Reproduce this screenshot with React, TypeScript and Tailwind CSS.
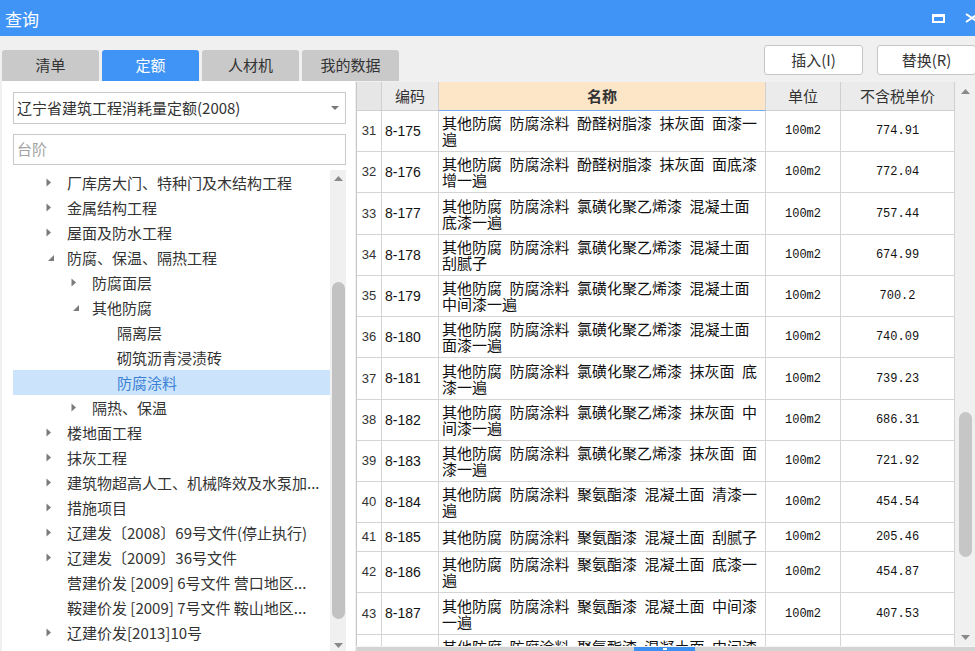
import React from "react";

const cjk = "font-['Noto_Sans_CJK_SC',sans-serif]";
const mono = "font-['Liberation_Mono',monospace]";
const sans = "font-['Liberation_Sans',sans-serif]";

type TreeNode = {
  label: string;
  level: 0 | 1 | 2;
  arrow: "right" | "down" | null;
  selected?: boolean;
};

const tree: TreeNode[] = [
  { label: "厂库房大门、特种门及木结构工程", level: 0, arrow: "right" },
  { label: "金属结构工程", level: 0, arrow: "right" },
  { label: "屋面及防水工程", level: 0, arrow: "right" },
  { label: "防腐、保温、隔热工程", level: 0, arrow: "down" },
  { label: "防腐面层", level: 1, arrow: "right" },
  { label: "其他防腐", level: 1, arrow: "down" },
  { label: "隔离层", level: 2, arrow: null },
  { label: "砌筑沥青浸渍砖", level: 2, arrow: null },
  { label: "防腐涂料", level: 2, arrow: null, selected: true },
  { label: "隔热、保温", level: 1, arrow: "right" },
  { label: "楼地面工程", level: 0, arrow: "right" },
  { label: "抹灰工程", level: 0, arrow: "right" },
  { label: "建筑物超高人工、机械降效及水泵加...", level: 0, arrow: "right" },
  { label: "措施项目", level: 0, arrow: "right" },
  { label: "辽建发〔2008〕69号文件(停止执行)", level: 0, arrow: "right" },
  { label: "辽建发〔2009〕36号文件", level: 0, arrow: "right" },
  { label: "营建价发 [2009] 6号文件 营口地区...", level: 0, arrow: null },
  { label: "鞍建价发 [2009] 7号文件 鞍山地区...", level: 0, arrow: null },
  { label: "辽建价发[2013]10号", level: 0, arrow: "right" },
  { label: "辽建价发[2014]29号", level: 0, arrow: "right" },
];

const indent = ["pl-[33px]", "pl-[58px]", "pl-[83px]"];

type Row = { n: number; code: string; lines: string[]; price: string; h: string };

const rows: Row[] = [
  { n: 31, code: "8-175", lines: ["其他防腐 防腐涂料 酚醛树脂漆 抹灰面 面漆一", "遍"], price: "774.91", h: "h-[41px]" },
  { n: 32, code: "8-176", lines: ["其他防腐 防腐涂料 酚醛树脂漆 抹灰面 面底漆", "增一遍"], price: "772.04", h: "h-[41px]" },
  { n: 33, code: "8-177", lines: ["其他防腐 防腐涂料 氯磺化聚乙烯漆 混凝土面", "底漆一遍"], price: "757.44", h: "h-[42px]" },
  { n: 34, code: "8-178", lines: ["其他防腐 防腐涂料 氯磺化聚乙烯漆 混凝土面", "刮腻子"], price: "674.99", h: "h-[41px]" },
  { n: 35, code: "8-179", lines: ["其他防腐 防腐涂料 氯磺化聚乙烯漆 混凝土面", "中间漆一遍"], price: "700.2", h: "h-[41px]" },
  { n: 36, code: "8-180", lines: ["其他防腐 防腐涂料 氯磺化聚乙烯漆 混凝土面", "面漆一遍"], price: "740.09", h: "h-[41px]" },
  { n: 37, code: "8-181", lines: ["其他防腐 防腐涂料 氯磺化聚乙烯漆 抹灰面 底", "漆一遍"], price: "739.23", h: "h-[42px]" },
  { n: 38, code: "8-182", lines: ["其他防腐 防腐涂料 氯磺化聚乙烯漆 抹灰面 中", "间漆一遍"], price: "686.31", h: "h-[41px]" },
  { n: 39, code: "8-183", lines: ["其他防腐 防腐涂料 氯磺化聚乙烯漆 抹灰面 面", "漆一遍"], price: "721.92", h: "h-[41px]" },
  { n: 40, code: "8-184", lines: ["其他防腐 防腐涂料 聚氨酯漆 混凝土面 清漆一", "遍"], price: "454.54", h: "h-[41px]" },
  { n: 41, code: "8-185", lines: ["其他防腐 防腐涂料 聚氨酯漆 混凝土面 刮腻子"], price: "205.46", h: "h-[29px]" },
  { n: 42, code: "8-186", lines: ["其他防腐 防腐涂料 聚氨酯漆 混凝土面 底漆一", "遍"], price: "454.87", h: "h-[41px]" },
  { n: 43, code: "8-187", lines: ["其他防腐 防腐涂料 聚氨酯漆 混凝土面 中间漆", "一遍"], price: "407.53", h: "h-[42px]" },
  { n: 44, code: "8-188", lines: ["其他防腐 防腐涂料 聚氨酯漆 混凝土面 中间漆", "二遍"], price: "398.12", h: "h-[41px]" },
];

function ArrowRight() {
  return (
    <svg width="6" height="9" viewBox="0 0 6 9">
      <path d="M0.5 0.5 L5 4.5 L0.5 8.5 Z" fill="#7b7b7b" />
    </svg>
  );
}

function ArrowDown() {
  return (
    <svg width="8" height="8" viewBox="0 0 8 8" className="ml-[1px]">
      <path d="M7 1 L7 7 L1 7 Z" fill="#7b7b7b" />
    </svg>
  );
}

function Tri({ up }: { up?: boolean }) {
  return (
    <svg width="9" height="5" viewBox="0 0 9 5">
      <path d={up ? "M0 5 L4.5 0 L9 5 Z" : "M0 0 L9 0 L4.5 5 Z"} fill="#8a8a8a" />
    </svg>
  );
}

export default function App() {
  return (
    <div className={`w-[975px] h-[651px] overflow-hidden bg-[#f0f0f0] flex flex-col ${cjk} text-[#333]`}>
      {/* title bar */}
      <div className="h-[36px] shrink-0 bg-[#3f94f5] flex items-center pl-[5px] pr-[0px]">
        <span className="text-[17px] text-white leading-none">查询</span>
        <div className="ml-auto flex items-center gap-[20px] -mr-[4px]">
          <svg width="13" height="9" viewBox="0 0 13 9">
            <rect x="1" y="1" width="11" height="7" fill="none" stroke="white" strokeWidth="2" />
            <rect x="0" y="0" width="13" height="3" fill="white" />
          </svg>
          <svg width="14" height="10" viewBox="0 0 14 10">
            <path d="M1 1 L13 9 M13 1 L1 9" stroke="white" strokeWidth="2" />
          </svg>
        </div>
      </div>

      {/* toolbar: tabs + buttons */}
      <div className="h-[45px] shrink-0 flex">
        <div className="flex items-end gap-[3px] ml-[2px]">
          {["清单", "定额", "人材机", "我的数据"].map((t) => (
            <div
              key={t}
              className={`w-[97px] h-[31px] rounded-t-[3px] flex items-center justify-center text-[15px] ${
                t === "定额" ? "bg-[#3f94f5] text-white" : "bg-[#c9c9c9] text-[#333]"
              }`}
            >
              {t}
            </div>
          ))}
        </div>
        <div className="ml-auto flex gap-[14px] pt-[9px] -mr-[1px]">
          {["插入(I)", "替换(R)"].map((b) => (
            <div
              key={b}
              className="w-[99px] h-[30px] bg-white border border-[#c6c6c6] rounded-[3px] flex items-center justify-center text-[15px] text-[#333]"
            >
              {b}
            </div>
          ))}
        </div>
      </div>

      {/* content */}
      <div className="flex flex-1 min-h-0">
        {/* left panel */}
        <div className="w-[353px] ml-[2px] bg-white flex flex-col pl-[11px] pt-[11px]">
          <div className="w-[333px] h-[32px] border border-[#c9c9c9] flex items-center pl-[3px] pr-[6px]">
            <span className="text-[15px] text-[#333]">辽宁省建筑工程消耗量定额(2008)</span>
            <svg width="8" height="4" viewBox="0 0 8 4" className="ml-auto">
              <path d="M0 0 L8 0 L4 4 Z" fill="#777" />
            </svg>
          </div>
          <div className="w-[333px] h-[31px] mt-[10px] border border-[#c9c9c9] flex items-center pl-[3px]">
            <span className="text-[15px] text-[#a3a3a3]">台阶</span>
          </div>
          <div className="flex mt-[5px] flex-1 min-h-0">
            <div className="w-[317px]">
              {tree.map((node, i) => (
                <div
                  key={i}
                  className={`h-[25px] flex items-center ${indent[node.level]} ${
                    node.selected ? "bg-[#cce4fb] text-[#3a80d6]" : "text-[#333]"
                  }`}
                >
                  <div className="w-[21px] flex items-center">
                    {node.arrow === "right" && <ArrowRight />}
                    {node.arrow === "down" && <ArrowDown />}
                  </div>
                  <span className="text-[15px] leading-none whitespace-nowrap">{node.label}</span>
                </div>
              ))}
            </div>
            <div className="w-[16px] bg-[#f0f0f0] flex flex-col items-center">
              <div className="h-[16px] flex items-center">
                <Tri up />
              </div>
              <div className="w-[13px] h-[337px] mt-[96px] rounded-full bg-[#c2c2c2]" />
              <div className="mt-[24px]">
                <Tri />
              </div>
            </div>
          </div>
        </div>

        {/* right panel */}
        <div className="w-[619px] ml-[1px] mt-[1px] flex flex-col">
          <div className="flex">
            <div className="w-[599px] border-l border-[#c8c8c8] bg-white">
              {/* header */}
              <div className="flex h-[29px] text-[15px] text-[#333]">
                <div className="w-[25px] bg-[#e6e6e6] border-r border-b border-[#d0d0d0]" />
                <div className="w-[57px] bg-[#ebebeb] border-r border-b border-[#d0d0d0] flex items-center justify-center">
                  编码
                </div>
                <div className="w-[327px] bg-[#fde5c8] border-r border-[#d0d0d0] border-b border-b-[#6fa8ee] flex items-center justify-center font-bold">
                  名称
                </div>
                <div className="w-[75px] bg-[#ebebeb] border-r border-b border-[#d0d0d0] flex items-center justify-center">
                  单位
                </div>
                <div className="w-[114px] bg-[#ebebeb] border-r border-b border-[#d0d0d0] flex items-center justify-center">
                  不含税单价
                </div>
              </div>
              {/* body */}
              <div className="h-[535px] overflow-hidden">
                {rows.map((r) => (
                  <div key={r.n} className={`flex ${r.h} border-b border-[#d4d4d4] text-[#111]`}>
                    <div className={`w-[25px] border-r border-[#d4d4d4] flex items-center justify-center ${sans} text-[13px] text-[#333]`}>
                      {r.n}
                    </div>
                    <div className={`w-[57px] border-r border-[#d4d4d4] flex items-center pl-[3px] ${sans} text-[14px]`}>
                      {r.code}
                    </div>
                    <div className="w-[327px] border-r border-[#d4d4d4] flex flex-col justify-center pl-[3px] text-[15px]">
                      {r.lines.map((l, i) => (
                        <div key={i} className="leading-[16px] whitespace-nowrap">
                          {l.replace(/ /g, "\u2002")}
                        </div>
                      ))}
                    </div>
                    <div className={`w-[75px] border-r border-[#d4d4d4] flex items-center justify-center ${mono} text-[12px]`}>
                      100m2
                    </div>
                    <div className={`w-[114px] border-r border-[#d4d4d4] flex items-center justify-center ${mono} text-[12px]`}>
                      {r.price}
                    </div>
                  </div>
                ))}
              </div>
            </div>
            {/* vertical scrollbar */}
            <div className="w-[20px] h-[564px] bg-[#f0f0f0] flex flex-col items-center">
              <div className="h-[18px] flex items-center">
                <Tri up />
              </div>
              <div className="w-[13px] h-[145px] mt-[312px] rounded-full bg-[#c6c6c6]" />
              <div className="mt-auto h-[18px] flex items-center">
                <Tri />
              </div>
            </div>
          </div>
          {/* horizontal scrollbar */}
          <div className="h-[5px] pt-[1px] bg-[#f5f5f5]">
            <div className="h-[4px] bg-[#d3d3d3] flex">
              <div className="ml-[278px] w-[61px] h-[4px] bg-[#3d8ff0] flex justify-center">
                <div className="w-[4px] h-[2px] bg-white mt-[1px]" />
              </div>
            </div>
          </div>
        </div>
      </div>
    </div>
  );
}
